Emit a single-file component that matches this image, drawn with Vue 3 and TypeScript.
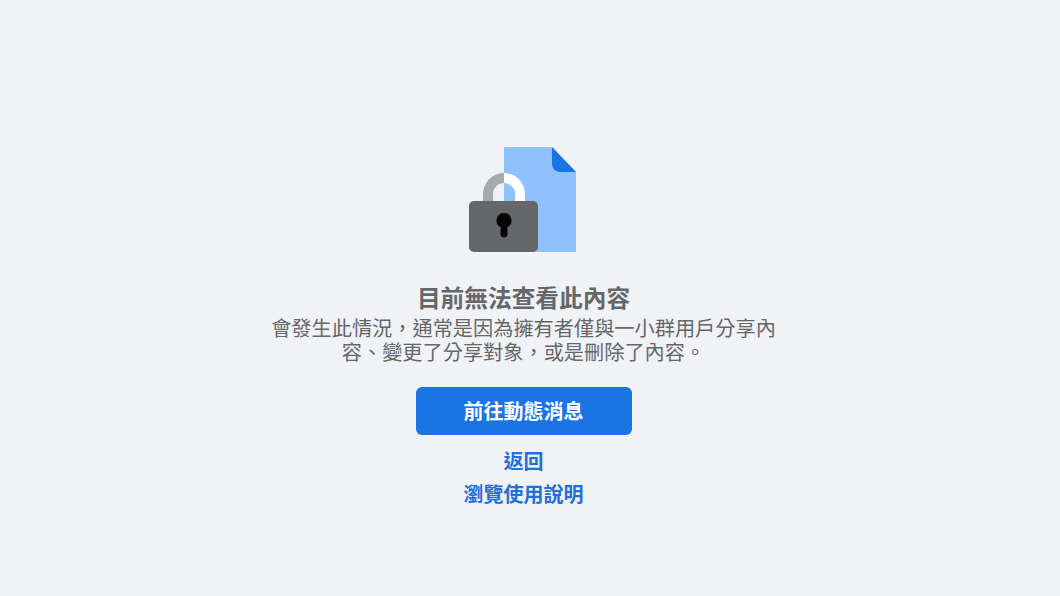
<template>
  <main class="page" lang="zh-Hant-TW">
    <div class="notice">
      <svg class="notice__art" width="112" height="112" viewBox="0.5 0 112 112" aria-hidden="true">
        <path d="M36.500 3h48l24 25v80h-72z" fill="#8fc1ff" />
        <path d="M84.500 3l24 25H92.500a8 8 0 0 1-8-8z" fill="#1b74e4" />
        <path d="M15.500 60V50a21 21 0 0 1 21-21v10a11 11 0 0 0-11 11v10z" fill="#a8a9ab" />
        <path d="M36.500 29a21 21 0 0 1 21 21v10h-10V50a11 11 0 0 0-11-11z" fill="#fff" />
        <rect x="1.500" y="57" width="69" height="51" rx="5" fill="#65676b" />
        <path d="M36.500 69a7.500 7.500 0 0 1 3.500 14.100V90a3.500 3.500 0 0 1-7 0v-6.900A7.500 7.500 0 0 1 36.500 69z" fill="#050505" />
      </svg>
      <h1 class="notice__title">目前無法查看此內容</h1>
      <p class="notice__text">會發生此情況，通常是因為擁有者僅與一小群用戶分享內容、變更了分享對象，或是刪除了內容。</p>
      <button class="notice__button" type="button">前往動態消息</button>
      <a class="notice__link notice__link--back" href="#">返回</a>
      <a class="notice__link" href="#">瀏覽使用說明</a>
    </div>
  </main>
</template>

<script setup lang="ts">
</script>

<style>
html,
body {
  margin: 0;
  background: #f0f2f5;
}
</style>

<style scoped>
.page {
  height: 596px;
  padding-right: 13px;
  display: flex;
  justify-content: center;
  font-family: "Noto Sans CJK TC", sans-serif;
}

.notice {
  width: 516px;
  padding-top: 144px;
  display: flex;
  flex-direction: column;
  align-items: center;
  text-align: center;
}

.notice__art {
  display: block;
}

.notice__title {
  margin: 27px 0 0;
  font-size: 23.700px;
  line-height: 28px;
  font-weight: 700;
  color: #65676b;
}

.notice__text {
  margin: 5px 0 0;
  font-size: 20.200px;
  line-height: 24px;
  color: #65676b;
}

.notice__button {
  width: 216px;
  height: 48px;
  margin-top: 23px;
  padding: 0 0 2px;
  border: 0;
  border-radius: 6px;
  background: #1b74e4;
  color: #fff;
  font: inherit;
  font-size: 20px;
  font-weight: 700;
}

.notice__link {
  font-size: 20px;
  line-height: 24px;
  font-weight: 700;
  color: #216fdb;
  text-decoration: none;
  margin-top: 9px;
}

.notice__link--back {
  margin-top: 14px;
}
</style>
